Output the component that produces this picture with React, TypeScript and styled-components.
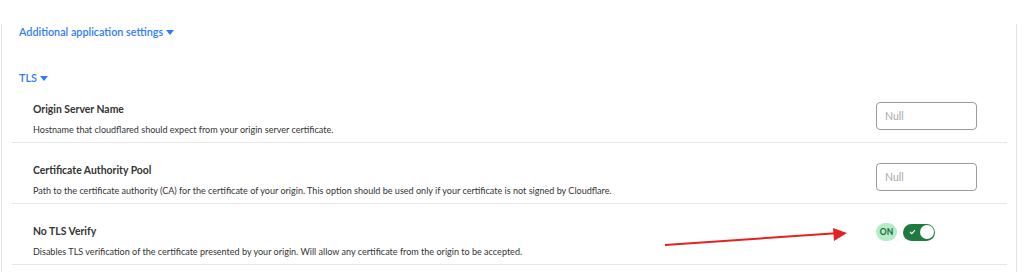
import styled, { createGlobalStyle } from 'styled-components';

const GlobalStyle = createGlobalStyle`
  html, body {
    margin: 0;
    padding: 0;
    background: #ffffff;
    font-family: Lato, 'Open Sans', sans-serif;
  }
`;

const Page = styled.div`
  position: relative;
  width: 1024px;
  height: 272px;
  overflow: hidden;
  background: #fff;
`;

const Panel = styled.div`
  margin-left: 1px;
  width: 1016px;
  height: 272px;
  border-left: 1px solid #e4e4e4;
  border-right: 1px solid #e4e4e4;
  box-sizing: border-box;
  padding: 0 9px 0 10px;
`;

const Toggle = styled.button<{ top: number }>`
  display: flex;
  align-items: center;
  gap: 3px;
  height: 16px;
  border: 0;
  background: none;
  padding: 0 0 0 7px;
  margin-top: ${(p) => p.top}px;
  font-family: inherit;
  font-size: 10.8px;
  line-height: 16px;
  font-weight: 600;
  color: #2f7cf6;
  cursor: pointer;
`;

const Caret = styled.span`
  width: 0;
  height: 0;
  border-left: 4px solid transparent;
  border-right: 4px solid transparent;
  border-top: 5px solid #2f7cf6;
`;

const Row = styled.div`
  display: flex;
  align-items: flex-start;
  justify-content: space-between;
  height: 61px;
  box-sizing: border-box;
  padding: 20px 30px 0 21px;
  border-bottom: 1px solid #e6e6e6;

  &:first-child {
    height: 57px;
    padding-top: 16px;
  }
`;

const Text = styled.div`
  display: flex;
  flex-direction: column;
  gap: 6px;
`;

const Title = styled.div`
  font-size: 10.4px;
  line-height: 15px;
  font-weight: 700;
  color: #333;
`;

const Desc = styled.div`
  font-size: 9.05px;
  line-height: 13px;
  color: #333;
`;

const Input = styled.input`
  width: 101px;
  height: 28px;
  box-sizing: border-box;
  border: 1px solid #9a9a9a;
  border-radius: 4px;
  padding: 0 8px;
  font-family: inherit;
  font-size: 10.5px;
  color: #333;
  &::placeholder {
    color: #a8a8a8;
  }
`;

const SwitchWrap = styled.div`
  display: flex;
  align-items: center;
  gap: 6px;
  width: 101px;
  margin-top: -1px;
`;

const Badge = styled.span`
  display: inline-flex;
  align-items: center;
  justify-content: center;
  width: 21px;
  height: 18px;
  border-radius: 9px;
  background: #b4ecc6;
  color: #1b6b3a;
  font-size: 8.5px;
  font-weight: 700;
`;

const Track = styled.span`
  position: relative;
  display: inline-flex;
  align-items: center;
  width: 32px;
  height: 17px;
  border-radius: 9px;
  background: #1f7a3f;
  box-sizing: border-box;
  padding-left: 6px;
`;

const Knob = styled.span`
  position: absolute;
  right: 1.5px;
  top: 1.5px;
  width: 14px;
  height: 14px;
  border-radius: 50%;
  background: #fff;
`;

const Arrow = styled.svg`
  position: absolute;
  left: 660px;
  top: 222px;
`;

type Setting = {
  title: string;
  desc: string;
  control: 'input' | 'switch';
};

const settings: Setting[] = [
  {
    title: 'Origin Server Name',
    desc: 'Hostname that cloudflared should expect from your origin server certificate.',
    control: 'input',
  },
  {
    title: 'Certificate Authority Pool',
    desc: 'Path to the certificate authority (CA) for the certificate of your origin. This option should be used only if your certificate is not signed by Cloudflare.',
    control: 'input',
  },
  {
    title: 'No TLS Verify',
    desc: 'Disables TLS verification of the certificate presented by your origin. Will allow any certificate from the origin to be accepted.',
    control: 'switch',
  },
];

export default function App() {
  return (
    <Page>
      <GlobalStyle />
      <Panel>
        <Toggle top={24}>
          Additional application settings <Caret />
        </Toggle>
        <Toggle top={30}>
          TLS <Caret />
        </Toggle>
        <div>
          {settings.map((s) => (
            <Row key={s.title}>
              <Text>
                <Title>{s.title}</Title>
                <Desc>{s.desc}</Desc>
              </Text>
              {s.control === 'input' ? (
                <Input placeholder="Null" />
              ) : (
                <SwitchWrap>
                  <Badge>ON</Badge>
                  <Track>
                    <svg width="7" height="6" viewBox="0 0 7 6">
                      <path d="M1 3 L2.8 4.6 L6 1.2" stroke="#fff" strokeWidth="1.2" fill="none" />
                    </svg>
                    <Knob />
                  </Track>
                </SwitchWrap>
              )}
            </Row>
          ))}
        </div>
      </Panel>
      <Arrow width="190" height="30" viewBox="0 0 190 30">
        <line x1="5" y1="23" x2="176" y2="11.2" stroke="#e32222" strokeWidth="2" />
        <path d="M173 6 L187 11 L174 19 Z" fill="#e32222" />
      </Arrow>
    </Page>
  );
}
